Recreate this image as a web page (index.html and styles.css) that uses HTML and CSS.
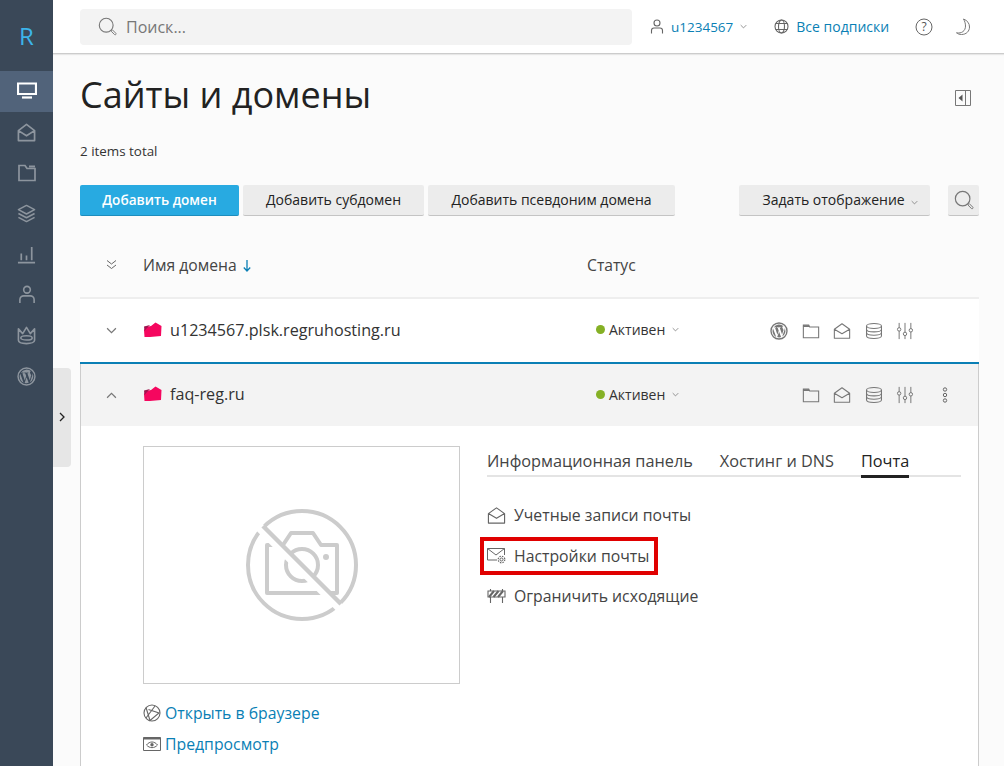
FILE: index.html
```html
<!DOCTYPE html>
<html lang="ru">
<head>
    <meta charset="UTF-8">
    <meta name="viewport" content="width=device-width, initial-scale=1.0">
    <title>Сайты и домены</title>
    <link rel="stylesheet" href="styles.css">
</head>
<body>
    <svg class="sprite" width="0" height="0">
        <symbol id="i-mail" viewBox="0 0 20 20">
            <path d="M1.500 8 10 2l8.500 6v10h-17z M1.500 8 10 13l8.500-5" fill="none" stroke="currentColor" stroke-width="1.200" stroke-linejoin="round"/>
        </symbol>
        <symbol id="i-folder" viewBox="0 0 20 20">
            <path d="M1.500 3.500h6l1 2h10v12h-17z" fill="none" stroke="currentColor" stroke-width="1.200"/>
            <path d="M1.500 3.500h6l1 2h-7.500z" fill="currentColor"/>
        </symbol>
        <symbol id="i-db" viewBox="0 0 20 20">
            <g fill="none" stroke="currentColor" stroke-width="1.200">
                <ellipse cx="10" cy="4.500" rx="8.300" ry="2.800"/>
                <path d="M1.700 4.500v11c0 1.600 3.700 2.800 8.300 2.800s8.300-1.200 8.300-2.800v-11"/>
                <path d="M1.700 8.200c0 1.600 3.700 2.800 8.300 2.800s8.300-1.200 8.300-2.800"/>
                <path d="M1.700 11.900c0 1.600 3.700 2.800 8.300 2.800s8.300-1.200 8.300-2.800"/>
            </g>
        </symbol>
        <symbol id="i-sliders" viewBox="0 0 20 20">
            <g fill="none" stroke="currentColor" stroke-width="1.100">
                <path d="M3.500 1v5.500M3.500 10v9M10 1v10.500M10 15v4M16.500 1v6.500M16.500 11v8"/>
                <circle cx="3.500" cy="8.200" r="1.900"/>
                <circle cx="10" cy="13.200" r="1.900"/>
                <circle cx="16.500" cy="9.200" r="1.900"/>
            </g>
        </symbol>
        <symbol id="i-wp" viewBox="0 0 20 20">
            <circle cx="10" cy="10" r="8.900" fill="none" stroke="currentColor" stroke-width="1.500"/>
            <path d="M2.800 10c0 2.900 1.700 5.400 4.100 6.600L3.400 7.100C3 8 2.800 9 2.800 10zM15 9.600c0-.9-.3-1.500-.6-2-.4-.6-.7-1.100-.7-1.700 0-.7.500-1.300 1.200-1.300h.1A7.200 7.200 0 0 0 4.100 6h.5c.8 0 1.900-.1 1.900-.1.400 0 .4.600 0 .6 0 0-.4.100-.8.100l2.500 7.500 1.500-4.500-1.100-3c-.4 0-.7-.1-.7-.1-.4 0-.3-.6 0-.6 0 0 1.200.1 1.900.1.800 0 1.900-.1 1.900-.1.400 0 .4.600 0 .6 0 0-.4.100-.8.100l2.500 7.400.7-2.300c.3-.9.500-1.500.5-2.100zM10.100 10.700 8 16.800a7.200 7.200 0 0 0 4.400-.1l-.1-.1zM16.300 6.600v.7c0 .7-.1 1.500-.5 2.500l-2.200 6.300a7.200 7.200 0 0 0 2.700-9.500z" fill="currentColor"/>
        </symbol>
        <symbol id="i-search" viewBox="0 0 22 22">
            <circle cx="9.500" cy="9.500" r="8" fill="none" stroke="currentColor" stroke-width="1.300"/>
            <path d="m15.500 15.500 1.200-.6 4 4c.4.500.3 1-.1 1.400-.4.400-.9.500-1.400.1l-4-4z" fill="none" stroke="currentColor" stroke-width="1.100"/>
        </symbol>
        <symbol id="i-chev" viewBox="0 0 10 6">
            <path d="m1 1 4 4 4-4" fill="none" stroke="currentColor" stroke-width="1.100"/>
        </symbol>
        <symbol id="i-tag" viewBox="0 0 20 16">
            <path d="M3 5 8 4 12.500.5 18.500 4 18 14 7 15H1.500L1 8z" fill="#f5075f"/>
            <path d="M1 4.500 7 3 4 6 1.500 9z" fill="#a0144f"/>
        </symbol>
    </svg>

    <div class="app">
        <nav class="sidebar">
            <div class="brand">R</div>
            <a class="side-item active">
                <svg width="20" height="18" viewBox="0 0 20 18"><path d="M1 1.500h18v10.500H1z" fill="none" stroke="currentColor" stroke-width="2.200"/><path d="M5 15.500h10" stroke="currentColor" stroke-width="2.200"/></svg>
            </a>
            <a class="side-item">
                <svg width="19" height="19" viewBox="0 0 20 20"><path d="M1.500 8 10 1.500 18.500 8v10.500h-17zM1.500 8 10 13.500 18.500 8" fill="none" stroke="currentColor" stroke-width="1.800" stroke-linejoin="round"/></svg>
            </a>
            <a class="side-item">
                <svg width="18" height="18" viewBox="0 0 18 18"><path d="M1 1.500h6l2 3h8v12H1z" fill="none" stroke="currentColor" stroke-width="1.700"/><path d="M11 1.500h6v2h-6z" fill="currentColor"/></svg>
            </a>
            <a class="side-item">
                <svg width="19" height="19" viewBox="0 0 20 20"><g fill="none" stroke="currentColor" stroke-width="1.600" stroke-linejoin="round"><path d="m10 1.500 8.500 4.500-8.500 4.500L1.500 6z"/><path d="m1.500 10 8.500 4.500 8.500-4.500"/><path d="m1.500 14 8.500 4.500 8.500-4.500"/></g></svg>
            </a>
            <a class="side-item">
                <svg width="19" height="19" viewBox="0 0 20 20"><path d="M1 18.500h18M4.500 9v7M10 11v5M15.500 2v14" fill="none" stroke="currentColor" stroke-width="1.800"/></svg>
            </a>
            <a class="side-item">
                <svg width="18" height="19" viewBox="0 0 18 20"><g fill="none" stroke="currentColor" stroke-width="1.700"><circle cx="9" cy="5" r="3.500"/><path d="M1.500 19v-3.500c0-2.500 2-4 4-4h7c2 0 4 1.500 4 4V19"/></g></svg>
            </a>
            <a class="side-item">
                <svg width="19" height="19" viewBox="0 0 20 20"><g fill="none" stroke="currentColor" stroke-width="1.700" stroke-linejoin="round"><path d="M1.500 3v12c0 2 3.500 3.500 8.500 3.500s8.500-1.500 8.500-3.500V3l-4.500 5L10 1.500 6 8z"/><ellipse cx="10" cy="12.500" rx="6" ry="2.200"/></g></svg>
            </a>
            <a class="side-item"><svg width="19" height="19"><use href="#i-wp"/></svg></a>
        </nav>
        <button class="side-toggle" type="button">
            <svg width="6" height="10" viewBox="0 0 6 10"><path d="m1 1 4 4-4 4" fill="none" stroke="#222" stroke-width="1.300"/></svg>
        </button>

        <div class="page">
            <header class="topbar">
                <div class="search-box">
                    <svg class="search-icon" width="19" height="19"><use href="#i-search"/></svg>
                    <span>Поиск...</span>
                </div>
                <a class="top-user">
                    <svg class="user-icon" width="14" height="15" viewBox="0 0 14 15"><g fill="none" stroke="#666" stroke-width="1.100"><circle cx="7" cy="4" r="3"/><path d="M1.500 14.500v-3c0-1.500 1-2.500 2.500-2.500h6c1.500 0 2.500 1 2.500 2.500v3"/></g></svg>
                    <span>u1234567</span>
                    <svg class="chev" width="7" height="5"><use href="#i-chev"/></svg>
                </a>
                <a class="top-subs">
                    <svg width="15" height="15" viewBox="0 0 15 15"><g fill="none" stroke="#666" stroke-width="1.100"><circle cx="7.500" cy="7.500" r="6.500"/><ellipse cx="7.500" cy="7.500" rx="3" ry="6.500"/><path d="M1.500 4.500h12M1.500 10.500h12"/></g></svg>
                    <span>Все подписки</span>
                </a>
                <svg class="top-help" width="18" height="18" viewBox="0 0 18 18"><circle cx="9" cy="9" r="8" fill="none" stroke="#666" stroke-width="1"/><text x="9" y="13" text-anchor="middle" class="help-mark">?</text></svg>
                <svg class="top-moon" width="16" height="18" viewBox="0 0 16 18"><path d="M8.500 1c4 1.500 6 4.500 6 8 0 4-3 7.500-8 7.500-2 0-3.700-.6-5-1.700 5 1 9-1.800 9-6.800 0-2.500-.8-5-2-7z" fill="none" stroke="#777" stroke-width="1"/></svg>
            </header>

            <main class="content">
                <div class="title-row">
                    <h1>Сайты и домены</h1>
                    <svg class="panel-icon" width="16" height="16" viewBox="0 0 16 16"><path d="M.5.500h15v15H.5zM10.500.500v15" fill="none" stroke="#777"/><path d="M7.500 4.500v7l-4-3.500z" fill="#555"/></svg>
                </div>
                <p class="total">2 items total</p>

                <div class="toolbar">
                    <button class="btn btn-primary" type="button">Добавить домен</button>
                    <button class="btn btn-sub" type="button">Добавить субдомен</button>
                    <button class="btn btn-alias" type="button">Добавить псевдоним домена</button>
                    <button class="btn btn-view" type="button">Задать отображение <svg class="chev" width="7" height="5"><use href="#i-chev"/></svg></button>
                    <button class="btn btn-find" type="button"><svg width="20" height="20"><use href="#i-search"/></svg></button>
                </div>

                <div class="domain-head">
                    <svg class="expand-all" width="11" height="11" viewBox="0 0 11 11"><path d="m1 1.500 4.500 3.500L10 1.500M1 6l4.500 3.500L10 6" fill="none" stroke="#666" stroke-width="1"/></svg>
                    <div class="col-name">Имя домена <svg class="sort-arrow" width="8" height="12" viewBox="0 0 8 12"><path d="M4 0v11M.8 7.500 4 11l3.200-3.500" fill="none" stroke="#0a7fb5" stroke-width="1.300"/></svg></div>
                    <div class="col-status">Статус</div>
                </div>

                <div class="domain-row">
                    <svg class="row-chev" width="11" height="7"><use href="#i-chev"/></svg>
                    <div class="domain-name"><svg width="20" height="16"><use href="#i-tag"/></svg>u1234567.plsk.regruhosting.ru</div>
                    <div class="status"><i class="dot"></i>Активен<svg class="chev" width="7" height="5"><use href="#i-chev"/></svg></div>
                    <div class="row-icons">
                        <svg width="18" height="18"><use href="#i-wp"/></svg>
                        <svg width="18" height="18"><use href="#i-folder"/></svg>
                        <svg width="18" height="18"><use href="#i-mail"/></svg>
                        <svg width="18" height="18"><use href="#i-db"/></svg>
                        <svg width="18" height="18"><use href="#i-sliders"/></svg>
                        <span class="dots-slot"></span>
                    </div>
                </div>

                <div class="domain-open">
                    <div class="domain-row grey">
                        <svg class="row-chev up" width="11" height="7"><use href="#i-chev"/></svg>
                        <div class="domain-name"><svg width="20" height="16"><use href="#i-tag"/></svg>faq-reg.ru</div>
                        <div class="status"><i class="dot"></i>Активен<svg class="chev" width="7" height="5"><use href="#i-chev"/></svg></div>
                        <div class="row-icons">
                            <span class="icon-slot"></span>
                            <svg width="18" height="18"><use href="#i-folder"/></svg>
                            <svg width="18" height="18"><use href="#i-mail"/></svg>
                            <svg width="18" height="18"><use href="#i-db"/></svg>
                            <svg width="18" height="18"><use href="#i-sliders"/></svg>
                            <span class="dots-slot">
                                <svg width="6" height="16" viewBox="0 0 6 16"><g fill="none" stroke="#666"><circle cx="3" cy="2.500" r="1.700"/><circle cx="3" cy="8" r="1.700"/><circle cx="3" cy="13.500" r="1.700"/></g></svg>
                            </span>
                        </div>
                    </div>

                    <div class="domain-body">
                        <div class="preview-col">
                            <div class="thumb">
                                <svg width="112" height="112" viewBox="0 0 112 112">
                                    <g fill="none" stroke="#ccc" stroke-width="4">
                                        <circle cx="56" cy="56" r="54"/>
                                        <path d="M29 36H21v48h70V36H75L67 24H45L37 36" stroke-linejoin="round"/>
                                        <circle cx="56" cy="56" r="16"/>
                                    </g>
                                    <circle cx="80" cy="48" r="3" fill="#ccc"/>
                                    <path d="M7 12 98 103" stroke="#fff" stroke-width="9"/>
                                    <path d="M17 17 95 95" stroke="#ccc" stroke-width="4.500"/>
                                </svg>
                            </div>
                            <a class="side-link">
                                <svg width="18" height="18" viewBox="0 0 18 18"><g fill="none" stroke="#666" stroke-width="1.100"><circle cx="9" cy="9" r="8"/><path d="M3 3.500 7 16.500l9-7.500L5.500 5.500M3 14l9-12"/></g></svg>
                                Открыть в браузере
                            </a>
                            <a class="side-link">
                                <svg width="18" height="14" viewBox="0 0 18 14"><path d="M.5 .5h17v13H.5z" fill="none" stroke="#666"/><path d="M.5 .5h17v2H.5z" fill="#666"/><path d="M3.500 8c3-4 8-4 11 0-3 3.500-8 3.500-11 0z" fill="none" stroke="#666"/><circle cx="9" cy="7.800" r="1.700" fill="#666"/></svg>
                                Предпросмотр
                            </a>
                        </div>

                        <div class="tabs-col">
                            <div class="tabs">
                                <span class="tab">Информационная панель</span>
                                <span class="tab">Хостинг и DNS</span>
                                <span class="tab current">Почта</span>
                            </div>
                            <ul class="mail-menu">
                                <li><svg width="19" height="19"><use href="#i-mail"/></svg>Учетные записи почты</li>
                                <li class="marked">
                                    <svg width="19" height="17" viewBox="0 0 19 17"><g fill="none" stroke="#666" stroke-width="1"><path d="M10 13H.5V1.500h17V8M.5 1.500 9 8l8.500-6.500"/><circle cx="14.500" cy="12.500" r="1.500"/></g><circle cx="14.500" cy="12.500" r="3.300" fill="none" stroke="#666" stroke-width="1.200" stroke-dasharray="1.500 1.100"/></svg>
                                    Настройки почты
                                </li>
                                <li>
                                    <svg width="19" height="17" viewBox="0 0 19 17"><g fill="none" stroke="#666" stroke-width="1.100"><path d="M1 4h17v6H1z"/><path d="M3.500 16V10M15.500 16V10M3.500 4V2M15.500 4V2"/></g><path d="M2 10 7 4M6.500 10l5-6M11 10l5-6" stroke="#666" stroke-width="2"/></svg>
                                    Ограничить исходящие
                                </li>
                            </ul>
                        </div>
                    </div>
                </div>
            </main>
        </div>
    </div>
</body>
</html>
```
FILE: styles.css
```css
html, body {
    margin: 0;
    height: 100%;
    overflow: hidden;
}
body {
    font-family: "Open Sans", "Noto Sans", sans-serif;
    color: #222;
    background: #fbfbfb;
}
.sprite {
    display: block;
    position: absolute;
}
.app {
    display: flex;
    height: 766px;
    position: relative;
}

/* left menu */
.sidebar {
    width: 53px;
    flex: none;
    background: #3a4858;
    color: #8d959e;
}
.brand {
    height: 71px;
    display: flex;
    align-items: center;
    justify-content: center;
    color: #3cb4ea;
    font-size: 24px;
}
.side-item {
    height: 40.700px;
    display: flex;
    align-items: center;
    justify-content: center;
}
.side-item.active {
    color: #fff;
    background: #51637a;
}
.side-toggle {
    position: absolute;
    left: 53px;
    top: 368px;
    width: 18px;
    height: 99px;
    padding: 0;
    border: none;
    border-radius: 0 4px 4px 0;
    background: #e6e6e6;
}

.page {
    flex: 1;
    min-width: 0;
}

/* top bar */
.topbar {
    height: 54px;
    box-sizing: border-box;
    background: #fff;
    border-bottom: 1px solid #ccc;
    box-shadow: 0 1px 1px rgba(0,0,0,0.08);
    display: flex;
    align-items: center;
    padding: 0 25px 0 27px;
    font-size: 13.500px;
}
.search-box {
    width: 552px;
    height: 36px;
    box-sizing: border-box;
    padding-left: 18px;
    background: #f3f3f3;
    border-radius: 4px;
    display: flex;
    align-items: center;
    gap: 9px;
    font-size: 16px;
    color: #777;
}
.search-icon {
    color: #777;
}
.top-user {
    margin-left: 18px;
    display: flex;
    align-items: center;
    gap: 7px;
    color: #0a7fb5;
}
.chev {
    color: #777;
}
.top-subs {
    margin-left: 27px;
    display: flex;
    align-items: center;
    gap: 7px;
    font-size: 14px;
    color: #0a7fb5;
    font-weight: 500;
}
.top-help {
    margin-left: 26px;
}
.help-mark {
    font-size: 12px;
    fill: #555;
}
.top-moon {
    margin-left: 22px;
}

/* content */
.content {
    padding: 0 25px 0 27px;
}
.title-row {
    height: 83px;
    display: flex;
    align-items: center;
    justify-content: space-between;
    padding-right: 8px;
}
h1 {
    margin: 0 0 3px;
    font-size: 36px;
    font-weight: 400;
    color: #222;
}
.panel-icon {
    margin-top: 4px;
}
.total {
    margin: 5px 0 0;
    height: 43px;
    line-height: 18px;
    font-size: 13.400px;
    color: #333;
}

.toolbar {
    display: flex;
    gap: 4px;
}
.btn {
    height: 31px;
    padding: 0 0 2px;
    border: none;
    border-bottom: 1px solid #c4c4c4;
    border-radius: 2px;
    background: #ececec;
    color: #222;
    font-family: inherit;
    font-size: 14px;
}
.btn-primary {
    width: 159px;
    background: #28aae1;
    border-bottom-color: #1d8dbd;
    color: #fff;
    font-size: 13.600px;
    font-weight: 600;
}
.btn-sub {
    width: 181px;
}
.btn-alias {
    width: 247px;
}
.btn-view {
    width: 191px;
    margin-left: 60px;
    padding-left: 12px;
}
.btn-view .chev {
    margin-left: 3px;
}
.btn-find {
    width: 31px;
    margin-left: 14px;
    padding: 0;
    color: #777;
    display: flex;
    align-items: center;
    justify-content: center;
}

/* domain list */
.domain-head {
    height: 83px;
    box-sizing: border-box;
    border-bottom: 2px solid #eee;
    display: flex;
    align-items: center;
    padding-top: 16px;
    font-size: 15.700px;
    color: #444;
}
.expand-all {
    margin: 0 26px;
    flex: none;
}
.col-name {
    width: 444px;
}
.sort-arrow {
    margin-left: 2px;
    vertical-align: -1px;
}
.domain-row {
    height: 63px;
    background: #fff;
    display: flex;
    align-items: center;
    border-bottom: 2px solid #0a7fb5;
}
.domain-row.grey {
    height: 62px;
    background: #f3f3f3;
    border-bottom: none;
}
.row-chev {
    margin: 0 26px;
    color: #777;
    flex: none;
}
.row-chev.up {
    transform: rotate(180deg);
}
.domain-name {
    width: 453px;
    margin-bottom: 2px;
    display: flex;
    align-items: center;
    gap: 7px;
    font-size: 16.150px;
    font-weight: 500;
    color: #333;
}
.status {
    width: 174px;
    margin-bottom: 2px;
    display: flex;
    align-items: center;
    font-size: 14px;
    font-weight: 500;
    color: #333;
}
.dot {
    width: 9px;
    height: 9px;
    border-radius: 50%;
    background: #85b025;
    margin-right: 4px;
}
.status .chev {
    margin-left: 7px;
}
.row-icons {
    display: flex;
    align-items: center;
    gap: 13.500px;
    color: #777;
}
.icon-slot {
    width: 18px;
}
.dots-slot {
    width: 18px;
    margin-left: 8px;
    display: flex;
    justify-content: center;
}
.domain-open {
    border-left: 1px solid #ccc;
    border-right: 1px solid #ccc;
}
.domain-open .domain-row .row-chev {
    margin-left: 25px;
}
.domain-body {
    background: #fff;
    display: flex;
    padding: 20px 17px 0 62px;
    height: 340px;
}
.preview-col {
    width: 317px;
    flex: none;
}
.thumb {
    height: 238px;
    box-sizing: border-box;
    border: 1px solid #ccc;
    display: flex;
    align-items: center;
    justify-content: center;
    margin-bottom: 13px;
}
.side-link {
    height: 31px;
    display: flex;
    align-items: center;
    gap: 4px;
    font-size: 15.800px;
    color: #0a7fb5;
}
.tabs-col {
    flex: 1;
    margin-left: 27px;
}
.tabs {
    display: flex;
    gap: 27px;
    height: 31px;
    box-sizing: border-box;
    border-bottom: 2px solid #e4e4e4;
    font-size: 16.300px;
    font-weight: 500;
    color: #444;
}
.tab {
    height: 32px;
    line-height: 30px;
    box-sizing: border-box;
}
.tab.current {
    color: #222;
    border-bottom: 3px solid #222;
}
.mail-menu {
    list-style: none;
    margin: 18px 0 0;
    padding: 0;
}
.mail-menu li {
    height: 40.500px;
    width: fit-content;
    display: flex;
    align-items: center;
    gap: 8px;
    font-size: 15.800px;
    color: #444;
}
.mail-menu svg {
    color: #666;
}
.mail-menu .marked {
    height: 24px;
    margin: 8px 0;
    padding-right: 2px;
    outline: 4px solid #e00000;
    outline-offset: 3px;
}
```
